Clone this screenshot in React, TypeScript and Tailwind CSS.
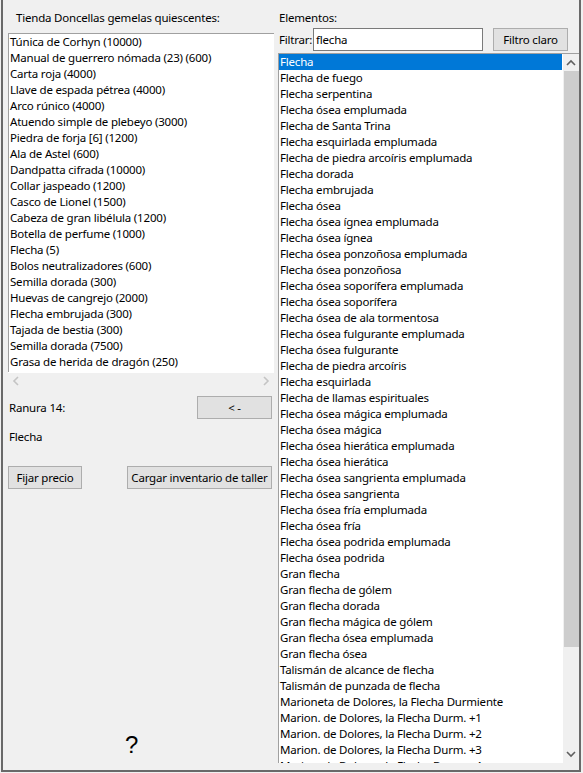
import React from "react";

const leftItems = [
  "Túnica de Corhyn (10000)",
  "Manual de guerrero nómada (23) (600)",
  "Carta roja (4000)",
  "Llave de espada pétrea (4000)",
  "Arco rúnico (4000)",
  "Atuendo simple de plebeyo (3000)",
  "Piedra de forja [6] (1200)",
  "Ala de Astel (600)",
  "Dandpatta cifrada (10000)",
  "Collar jaspeado (1200)",
  "Casco de Lionel (1500)",
  "Cabeza de gran libélula (1200)",
  "Botella de perfume (1000)",
  "Flecha (5)",
  "Bolos neutralizadores (600)",
  "Semilla dorada (300)",
  "Huevas de cangrejo (2000)",
  "Flecha embrujada (300)",
  "Tajada de bestia (300)",
  "Semilla dorada (7500)",
  "Grasa de herida de dragón (250)",
];

const rightItems = [
  "Flecha",
  "Flecha de fuego",
  "Flecha serpentina",
  "Flecha ósea emplumada",
  "Flecha de Santa Trina",
  "Flecha esquirlada emplumada",
  "Flecha de piedra arcoíris emplumada",
  "Flecha dorada",
  "Flecha embrujada",
  "Flecha ósea",
  "Flecha ósea ígnea emplumada",
  "Flecha ósea ígnea",
  "Flecha ósea ponzoñosa emplumada",
  "Flecha ósea ponzoñosa",
  "Flecha ósea soporífera emplumada",
  "Flecha ósea soporífera",
  "Flecha ósea de ala tormentosa",
  "Flecha ósea fulgurante emplumada",
  "Flecha ósea fulgurante",
  "Flecha de piedra arcoíris",
  "Flecha esquirlada",
  "Flecha de llamas espirituales",
  "Flecha ósea mágica emplumada",
  "Flecha ósea mágica",
  "Flecha ósea hierática emplumada",
  "Flecha ósea hierática",
  "Flecha ósea sangrienta emplumada",
  "Flecha ósea sangrienta",
  "Flecha ósea fría emplumada",
  "Flecha ósea fría",
  "Flecha ósea podrida emplumada",
  "Flecha ósea podrida",
  "Gran flecha",
  "Gran flecha de gólem",
  "Gran flecha dorada",
  "Gran flecha mágica de gólem",
  "Gran flecha ósea emplumada",
  "Gran flecha ósea",
  "Talismán de alcance de flecha",
  "Talismán de punzada de flecha",
  "Marioneta de Dolores, la Flecha Durmiente",
  "Marion. de Dolores, la Flecha Durm. +1",
  "Marion. de Dolores, la Flecha Durm. +2",
  "Marion. de Dolores, la Flecha Durm. +3",
  "Marion. de Dolores, la Flecha Durm. +4",
];

function Chevron({ dir, color }: { dir: "up" | "down" | "left" | "right"; color: string }) {
  const pts: Record<string, string> = {
    up: "1,6 5,2 9,6",
    down: "1,2 5,6 9,2",
    left: "6,1 2,5 6,9",
    right: "2,1 6,5 2,9",
  };
  const w = dir === "up" || dir === "down" ? 10 : 8;
  const h = dir === "up" || dir === "down" ? 8 : 10;
  return (
    <svg width={w} height={h} viewBox={`0 0 ${w} ${h}`}>
      <polyline points={pts[dir]} fill="none" stroke={color} strokeWidth="1.6" />
    </svg>
  );
}

function Btn({ children, className }: { children: React.ReactNode; className: string }) {
  return (
    <div
      className={
        "flex items-center justify-center whitespace-nowrap border border-[#adadad] bg-[#e1e1e1] text-black " +
        className
      }
    >
      {children}
    </div>
  );
}

export default function App() {
  return (
    <div className="w-[583px] h-[773px] bg-[#f0f0f0] font-['Noto_Sans',sans-serif] text-[11.5px] tracking-[-0.2px] leading-[16px] text-black overflow-hidden">
      <div className="ml-[1px] w-[580px] h-[772px] border-l-2 border-r-2 border-b-2 border-[#696969] flex">
        {/* Left column */}
        <div className="w-[266px] ml-[5px] flex flex-col">
          <div className="h-[33px] pt-[10px] pl-[8px]">Tienda Doncellas gemelas quiescentes:</div>
          <div className="h-[339px] bg-white border-t border-l border-[#a0a0a0] pl-[1px] overflow-hidden">
            {leftItems.map((t) => (
              <div key={t} className="h-[16px] whitespace-nowrap">
                {t}
              </div>
            ))}
          </div>
          <div className="h-[17px] flex items-center justify-between px-[4px] border-t border-white">
            <Chevron dir="left" color="#c4c4c4" />
            <Chevron dir="right" color="#c4c4c4" />
          </div>
          <div className="mt-[7px] h-[23px] flex items-center justify-between">
            <span className="pl-[1px]">Ranura 14:</span>
            <Btn className="w-[75px] h-[23px] mr-[2px]">&lt; -</Btn>
          </div>
          <div className="mt-[10px] h-[16px] pl-[1px]">Flecha</div>
          <div className="mt-[21px] flex justify-between">
            <Btn className="w-[74px] h-[23px]">Fijar precio</Btn>
            <Btn className="w-[145px] h-[23px] mr-[2px]">Cargar inventario de taller</Btn>
          </div>
          <div className="mt-[242px] pl-[117px] text-[24px] leading-[28px] tracking-normal font-['Liberation_Sans',sans-serif]">
            ?
          </div>
        </div>
        {/* Right column */}
        <div className="ml-[4px] flex-1 flex flex-col">
          <div className="h-[27px] pt-[10px] pl-[1px]">Elementos:</div>
          <div className="h-[26px] flex items-center pb-[1px]">
            <span className="pl-[1px] w-[35px] whitespace-nowrap">Filtrar:</span>
            <div className="w-[170px] h-[23px] bg-white border border-[#7a7a7a] flex items-center pl-[2px]">
              flecha
            </div>
            <Btn className="ml-[10px] w-[75px] h-[23px]">Filtro claro</Btn>
          </div>
          <div className="h-[710px] border-t border-l border-[#a0a0a0] bg-white flex overflow-hidden">
            <div className="flex-1 overflow-hidden">
              {rightItems.map((t, i) => (
                <div
                  key={t}
                  className={
                    "h-[16px] whitespace-nowrap pl-[1px] " + (i === 0 ? "bg-[#0078d7] text-white" : "")
                  }
                >
                  {t}
                </div>
              ))}
            </div>
            <div className="w-[17px] bg-[#f0f0f0] flex flex-col items-center border-l border-white">
              <div className="h-[17px] flex items-center justify-center">
                <Chevron dir="up" color="#606060" />
              </div>
              <div className="w-[15px] h-[576px] bg-[#cdcdcd]" />
              <div className="flex-1" />
              <div className="h-[17px] flex items-center justify-center mb-[1px]">
                <Chevron dir="down" color="#606060" />
              </div>
            </div>
          </div>
        </div>
      </div>
    </div>
  );
}
